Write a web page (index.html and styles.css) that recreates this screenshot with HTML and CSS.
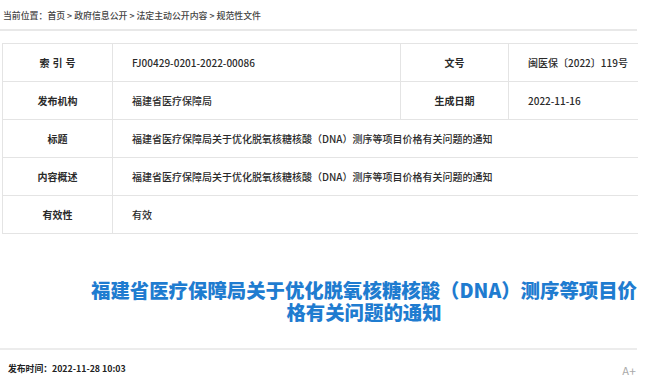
FILE: index.html
```html
<!DOCTYPE html>
<html lang="zh-CN">
<head>
    <meta charset="UTF-8">
    <meta name="viewport" content="width=device-width, initial-scale=1.0">
    <title>规范性文件</title>
    <link rel="stylesheet" href="styles.css">
</head>
<body>
    <div class="page">
        <!-- Breadcrumb -->
        <div class="crumb">
            当前位置：<a href="#">首页</a> &gt; <a href="#">政府信息公开</a> &gt; <a href="#">法定主动公开内容</a> &gt; <a href="#">规范性文件</a>
        </div>
        <!-- Document info table -->
        <table class="info">
            <colgroup>
                <col class="c1">
                <col class="c2">
                <col class="c3">
                <col class="c4">
            </colgroup>
            <tr>
                <th class="spaced">索引号</th>
                <td>FJ00429-0201-2022-00086</td>
                <th>文号</th>
                <td>闽医保〔2022〕119号</td>
            </tr>
            <tr>
                <th>发布机构</th>
                <td>福建省医疗保障局</td>
                <th>生成日期</th>
                <td>2022-11-16</td>
            </tr>
            <tr>
                <th>标题</th>
                <td colspan="3">福建省医疗保障局关于优化脱氧核糖核酸（DNA）测序等项目价格有关问题的通知</td>
            </tr>
            <tr>
                <th>内容概述</th>
                <td colspan="3">福建省医疗保障局关于优化脱氧核糖核酸（DNA）测序等项目价格有关问题的通知</td>
            </tr>
            <tr>
                <th>有效性</th>
                <td colspan="3">有效</td>
            </tr>
        </table>
        <!-- Article heading -->
        <h1 class="doc_title">福建省医疗保障局关于优化脱氧核糖核酸（DNA）测序等项目价格有关问题的通知</h1>
        <div class="meta">
            <span class="pub_time">发布时间：2022-11-28 10:03</span>
            <span class="font_btn">A+</span>
        </div>
    </div>
</body>
</html>
```

FILE: styles.css
```css
* {
    margin: 0;
    padding: 0;
    box-sizing: border-box;
}
body {
    font-family: "Noto Sans CJK SC", "Noto Sans", sans-serif;
    background-color: #fff;
    color: #333;
}
.page {
    width: 637px;
}
/* Breadcrumb */
.crumb {
    height: 31px;
    padding: 9px 0 0 3px;
    font-size: 8.9px;
    font-weight: 500;
    color: #444;
    border-bottom: 2px solid #e8e8e8;
}
.crumb a {
    color: #444;
    text-decoration: none;
}
/* Info table */
.info {
    margin: 12px 0 0 2px;
    width: 635px;
    border-collapse: collapse;
    table-layout: fixed;
    font-size: 10px;
}
.info .c1 { width: 110px; }
.info .c2 { width: 288px; }
.info .c3 { width: 108px; }
.info .c4 { width: 129px; }
.info th,
.info td {
    height: 38px;
    border-top: 1px solid #e4e4e4;
    border-bottom: 1px solid #e4e4e4;
    border-left: 1px solid #e4e4e4;
    white-space: nowrap;
}
.info th {
    font-weight: bold;
    color: #2a2a2a;
    text-align: center;
}
.info th.spaced {
    letter-spacing: 3px;
    text-indent: 3px;
}
.info td {
    padding-left: 19px;
    font-weight: 500;
    color: #2a2a2a;
}
/* Heading */
.doc_title {
    width: 550px;
    margin: 45px 0 0 89px;
    font-size: 19.4px;
    line-height: 22px;
    font-weight: 900;
    color: #1f7cd0;
    text-align: center;
}
.meta {
    margin-top: 25px;
    border-top: 2px solid #ececec;
    display: flex;
    justify-content: space-between;
    align-items: flex-end;
    padding: 8px 1px 0 8px;
}
.pub_time {
    font-size: 8.8px;
    font-weight: bold;
    color: #222;
}
.font_btn {
    font-size: 12px;
    color: #aaa;
    position: relative;
    top: 4px;
}
```
